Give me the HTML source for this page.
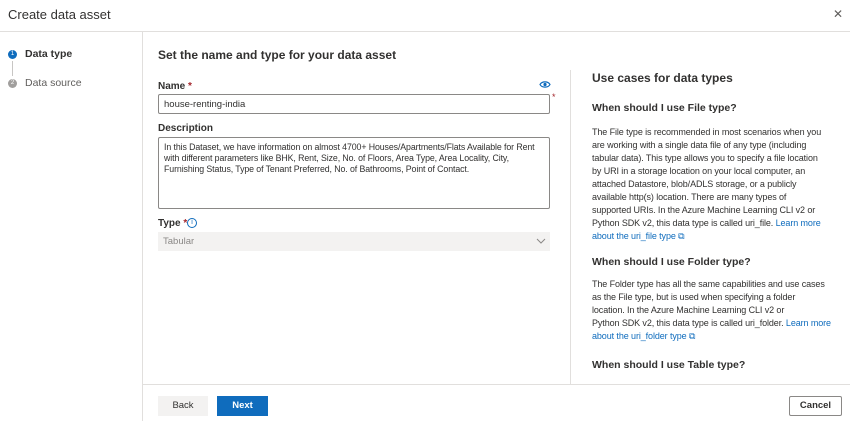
<!DOCTYPE html>
<html><head><meta charset="utf-8"><style>
*{box-sizing:border-box;margin:0;padding:0}
body{width:850px;height:421px;overflow:hidden;background:#fff;font-family:"Liberation Sans",sans-serif;color:#323130;position:relative}
.a{position:absolute}
.lbl{font-size:10px;font-weight:bold;color:#323130}
.req{color:#a4262c}
p.t{font-size:9px;line-height:13px;color:#323130;letter-spacing:-0.1px;white-space:nowrap}
a{color:#0f6cbd;text-decoration:none}
h3{font-size:10.5px;font-weight:bold}
</style></head><body>
<div class="a" style="left:8px;top:7px;font-size:13px;color:#323130">Create data asset</div>
<div class="a" style="left:833px;top:7px;font-size:12px;color:#605e5c">✕</div>
<div class="a" style="left:0;top:31px;width:850px;height:1px;background:#e1dfdd"></div>
<div class="a" style="left:142px;top:32px;width:1px;height:389px;background:#e1dfdd"></div>
<div class="a" style="left:8px;top:50px;width:9px;height:9px;border-radius:50%;background:#0f6cbd;color:#fff;font-size:6px;text-align:center;line-height:9px">1</div>
<div class="a" style="left:25px;top:48px;font-size:10.5px;font-weight:bold">Data type</div>
<div class="a" style="left:12px;top:61px;width:1px;height:15px;background:#c8c6c4"></div>
<div class="a" style="left:8px;top:79px;width:9px;height:9px;border-radius:50%;background:#a19f9d;color:#fff;font-size:6px;text-align:center;line-height:9px">2</div>
<div class="a" style="left:25px;top:77px;font-size:10.5px;color:#605e5c">Data source</div>

<div class="a" style="left:158px;top:48px;font-size:12px;font-weight:bold">Set the name and type for your data asset</div>
<div class="a lbl" style="left:158px;top:81px">Name <span class="req">*</span></div>
<svg class="a" style="left:539px;top:80px" width="12" height="9" viewBox="0 0 12 9"><path d="M1 4.5C3 1 9 1 11 4.5C9 8 3 8 1 4.5Z" fill="none" stroke="#0f6cbd" stroke-width="1.2"/><circle cx="6" cy="4.5" r="1.6" fill="#0f6cbd"/></svg>
<div class="a" style="left:158px;top:94px;width:392px;height:20px;border:1px solid #8a8886;border-radius:2px;font-size:9.5px;padding:4px 5px">house-renting-india</div>
<div class="a req" style="left:552px;top:92px;font-size:9px">*</div>
<div class="a lbl" style="left:158px;top:123px">Description</div>
<div class="a" style="left:158px;top:137px;width:392px;height:72px;border:1px solid #8a8886;border-radius:2px;font-size:8.8px;line-height:11px;padding:4px 5px;letter-spacing:-0.1px">In this Dataset, we have information on almost 4700+ Houses/Apartments/Flats Available for Rent with different parameters like BHK, Rent, Size, No. of Floors, Area Type, Area Locality, City, Furnishing Status, Type of Tenant Preferred, No. of Bathrooms, Point of Contact.</div>
<div class="a lbl" style="left:158px;top:218px">Type <span class="req">*</span></div>
<div class="a" style="left:187px;top:218px;width:10px;height:10px;border:1px solid #0f6cbd;border-radius:50%;color:#0f6cbd;font-size:7px;text-align:center;line-height:8px">i</div>
<div class="a" style="left:158px;top:232px;width:392px;height:19px;background:#f3f2f1;font-size:9.5px;color:#8a8886;padding:4px 5px">Tabular</div>
<svg class="a" style="left:536px;top:238px" width="10" height="6"><path d="M1 1L5 5L9 1" fill="none" stroke="#8a8886"/></svg>

<div class="a" style="left:570px;top:70px;width:1px;height:314px;background:#e1dfdd"></div>
<div class="a" style="left:592px;top:71px;font-size:12px;font-weight:bold">Use cases for data types</div>
<h3 class="a" style="left:592px;top:102px">When should I use File type?</h3>
<p class="a t" style="left:592px;top:126px">The File type is recommended in most scenarios when you<br>are working with a single data file of any type (including<br>tabular data). This type allows you to specify a file location<br>by URI in a storage location on your local computer, an<br>attached Datastore, blob/ADLS storage, or a publicly<br>available http(s) location. There are many types of<br>supported URIs. In the Azure Machine Learning CLI v2 or<br>Python SDK v2, this data type is called uri_file. <a>Learn more</a><br><a>about the uri_file type ⧉</a></p>
<h3 class="a" style="left:592px;top:256px">When should I use Folder type?</h3>
<p class="a t" style="left:592px;top:278px">The Folder type has all the same capabilities and use cases<br>as the File type, but is used when specifying a folder<br>location. In the Azure Machine Learning CLI v2 or<br>Python SDK v2, this data type is called uri_folder. <a>Learn more</a><br><a>about the uri_folder type ⧉</a></p>
<h3 class="a" style="left:592px;top:359px">When should I use Table type?</h3>

<div class="a" style="left:143px;top:384px;width:707px;height:1px;background:#e1dfdd"></div>
<div class="a" style="left:158px;top:396px;width:50px;height:20px;background:#f3f2f1;font-size:9.5px;text-align:center;line-height:20px">Back</div>
<div class="a" style="left:217px;top:396px;width:51px;height:20px;background:#0f6cbd;color:#fff;font-size:9.5px;font-weight:bold;text-align:center;line-height:20px">Next</div>
<div class="a" style="left:789px;top:396px;width:53px;height:20px;border:1px solid #8a8886;border-radius:2px;font-size:9.5px;font-weight:bold;text-align:center;line-height:18px">Cancel</div>
</body></html>
